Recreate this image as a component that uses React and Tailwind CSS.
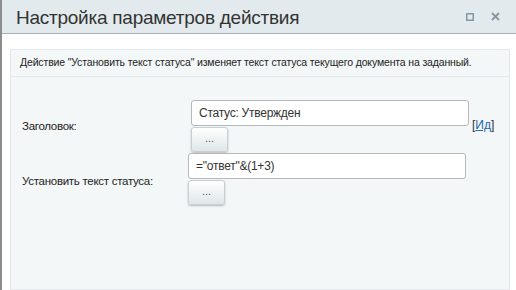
export default function App() {
  const btn =
    "w-[37px] h-[25px] rounded-[3px] border border-[#c9d0d4] bg-gradient-to-b from-[#ffffff] to-[#dfe6e9] shadow-[0_1px_2px_rgba(0,0,0,0.25)] flex items-center justify-center text-[11px] leading-none text-[#555] pb-[2px]";
  const input =
    "h-[26px] rounded-[3px] border border-[#b5b9bc] bg-white flex items-center px-[7px] text-[12px] tracking-[-0.25px] text-[#333]";
  return (
    <div
      className="w-[516px] h-[290px] overflow-hidden bg-white border-l-2 border-[#8c8c8c] flex flex-col"
      style={{ fontFamily: '"Liberation Sans", Arial, sans-serif' }}
    >
      <div className="h-[34px] shrink-0 bg-[#e2eaed] border-b border-[#aab1b4] flex items-center pl-[14px] pr-[16px]">
        <div className="text-[19px] tracking-[-0.25px] text-[#333] leading-none flex-1 pt-[1px]">
          Настройка параметров действия
        </div>
        <svg width="8" height="8" viewBox="0 0 8 8" className="mr-[17px]">
          <rect x="0.75" y="0.75" width="6.5" height="6.5" fill="none" stroke="#8596a5" strokeWidth="1.5" />
        </svg>
        <svg width="9" height="9" viewBox="0 0 9 9">
          <path d="M1 1 L8 8 M8 1 L1 8" stroke="#8596a5" strokeWidth="1.8" />
        </svg>
      </div>
      <div className="pt-[15px] pl-[8px] pr-[6px] flex-1">
        <div className="h-full border border-[#e3e9ec] bg-[#f4f7f8]">
          <div className="h-[27px] border-b border-[#e3e9ec] flex items-center pl-[9px] text-[10.5px] tracking-[-0.15px] text-[#222]">
            Действие "Установить текст статуса" изменяет текст статуса текущего документа на заданный.
          </div>
          <div className="pt-[23px] flex">
            <div className="w-[180px] pl-[11px] text-[11.5px] tracking-[-0.28px] text-[#222]">
              <div className="h-[53px] flex items-end pb-[18px]">Заголовок:</div>
              <div className="pt-[20px]">Установить текст статуса:</div>
            </div>
            <div className="flex flex-col">
              <div className="flex items-end">
                <div className="flex flex-col gap-[1px]">
                  <div className={input + " w-[278px]"}>Статус: Утвержден</div>
                  <div className={btn}>...</div>
                </div>
                <div className="text-[12px] text-[#333] ml-[3px] mb-[18px]">
                  [<span className="text-[#2067b0] underline">Ид</span>]
                </div>
              </div>
              <div className="flex flex-col gap-[1px] mt-[1px] -ml-[3px]">
                <div className={input + " w-[278px]"}>="ответ"&amp;(1+3)</div>
                <div className={btn}>...</div>
              </div>
            </div>
          </div>
        </div>
      </div>
    </div>
  );
}
